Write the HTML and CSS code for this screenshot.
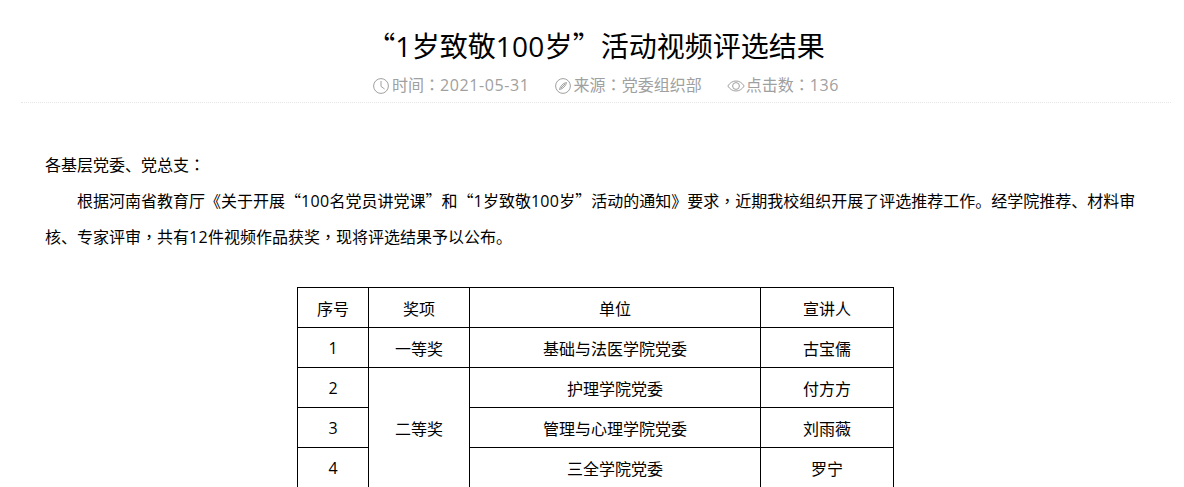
FILE: index.html
```html
<!DOCTYPE html>
<html lang="zh-CN">
<head>
<meta charset="utf-8">
<title>“1岁致敬100岁”活动视频评选结果</title>
<link rel="stylesheet" href="styles.css">
</head>
<body>
<article class="article">
  <header class="head">
    <h1 class="title"><span class="q">“</span><span class="num">1</span>岁致敬<span class="num">100</span>岁<span class="q">”</span>活动视频评选结果</h1>
    <div class="meta">
      <span class="meta-item">
        <svg class="icon" viewBox="0 0 16 16"><circle cx="8" cy="8" r="7.400"/><path d="M8 3V8.400L11.600 11"/></svg><span>时间<span class="p" lang="zh-TW">：</span><span class="num-wide">2021-05-31</span></span>
      </span>
      <span class="meta-item">
        <svg class="icon" viewBox="0 0 16 16"><circle cx="8" cy="8" r="7.400"/><path d="M11.500 4.500C11 7.500 8 11 4.500 11.500 5 8.500 8 5 11.500 4.500ZM6 10 10 6"/></svg><span>来源<span class="p" lang="zh-TW">：</span>党委组织部</span>
      </span>
      <span class="meta-item">
        <svg class="icon icon-eye" viewBox="0 0 18 12"><path d="M.8 6C3 2.600 5.800 1 9 1s6 1.600 8.200 5C15 9.400 12.200 11 9 11S3 9.400.8 6Z"/><circle cx="9" cy="6" r="3.400"/></svg><span>点击数<span class="p" lang="zh-TW">：</span><span class="num-wide">136</span></span>
      </span>
    </div>
  </header>
  <section class="content">
    <p class="para">各基层党委、党总支<span class="p" lang="zh-TW">：</span></p>
    <p class="para indent">根据河南省教育厅《关于开展<span class="q">“</span><span class="num">100</span>名党员讲党课<span class="q">”</span>和<span class="q">“</span><span class="num">1</span>岁致敬<span class="num">100</span>岁<span class="q">”</span>活动的通知》要求<span class="p" lang="zh-TW">，</span>近期我校组织开展了评选推荐工作。经学院推荐、材料审核、专家评审<span class="p" lang="zh-TW">，</span>共有<span class="num">12</span>件视频作品获奖<span class="p" lang="zh-TW">，</span>现将评选结果予以公布。</p>
    <table class="awards">
      <colgroup><col class="c1"><col class="c2"><col class="c3"><col class="c4"></colgroup>
      <tr><td>序号</td><td>奖项</td><td>单位</td><td>宣讲人</td></tr>
      <tr><td>1</td><td>一等奖</td><td>基础与法医学院党委</td><td>古宝儒</td></tr>
      <tr><td>2</td><td rowspan="3">二等奖</td><td>护理学院党委</td><td>付方方</td></tr>
      <tr><td>3</td><td>管理与心理学院党委</td><td>刘雨薇</td></tr>
      <tr><td>4</td><td>三全学院党委</td><td>罗宁</td></tr>
    </table>
  </section>
</article>
</body>
</html>
```
FILE: styles.css
```css
* { box-sizing: border-box; }
html, body { margin: 0; padding: 0; background: #fff; }
body {
  font-family: "Open Sans", "Noto Sans CJK SC", sans-serif;
  color: #000;
  font-size: 16px;
}
.q { font-family: "Noto Sans CJK SC", sans-serif; line-height: 1; }
.p { font-family: "Noto Sans CJK TC", sans-serif; line-height: 1; }
.num { letter-spacing: .3px; }
.num-wide { letter-spacing: .6px; }
.article { padding: 0 13px 0 21px; }
.head {
  border-bottom: 1px dotted #e6e6e6;
  padding-top: 24px;
  height: 103px;
  text-align: center;
}
.title {
  margin: 0;
  font-size: 28px;
  font-weight: 400;
  line-height: 44px;
}
.meta {
  display: flex;
  justify-content: center;
  gap: 25px;
  padding-left: 20px;
  line-height: 35px;
  color: #a0a0a0;
  font-size: 16px;
}
.meta-item { display: inline-flex; align-items: center; }
.icon {
  width: 16px;
  height: 16px;
  margin-right: 3px;
  fill: none;
  stroke: #a0a0a0;
  stroke-width: 1;
}
.icon-eye { width: 18px; height: 12px; margin-right: 1px; }
.content { padding: 44px 25px 0 24px; }
.para { margin: 0; line-height: 36px; }
.indent { text-indent: 32px; }
.awards {
  border-collapse: collapse;
  table-layout: fixed;
  width: 597px;
  margin: 32px auto 0;
}
.awards td {
  border: 1px solid #000;
  height: 40px;
  padding: 0;
  text-align: center;
  vertical-align: middle;
}
.c1 { width: 71px; }
.c2 { width: 101px; }
.c3 { width: 291px; }
.c4 { width: 133px; }
```
